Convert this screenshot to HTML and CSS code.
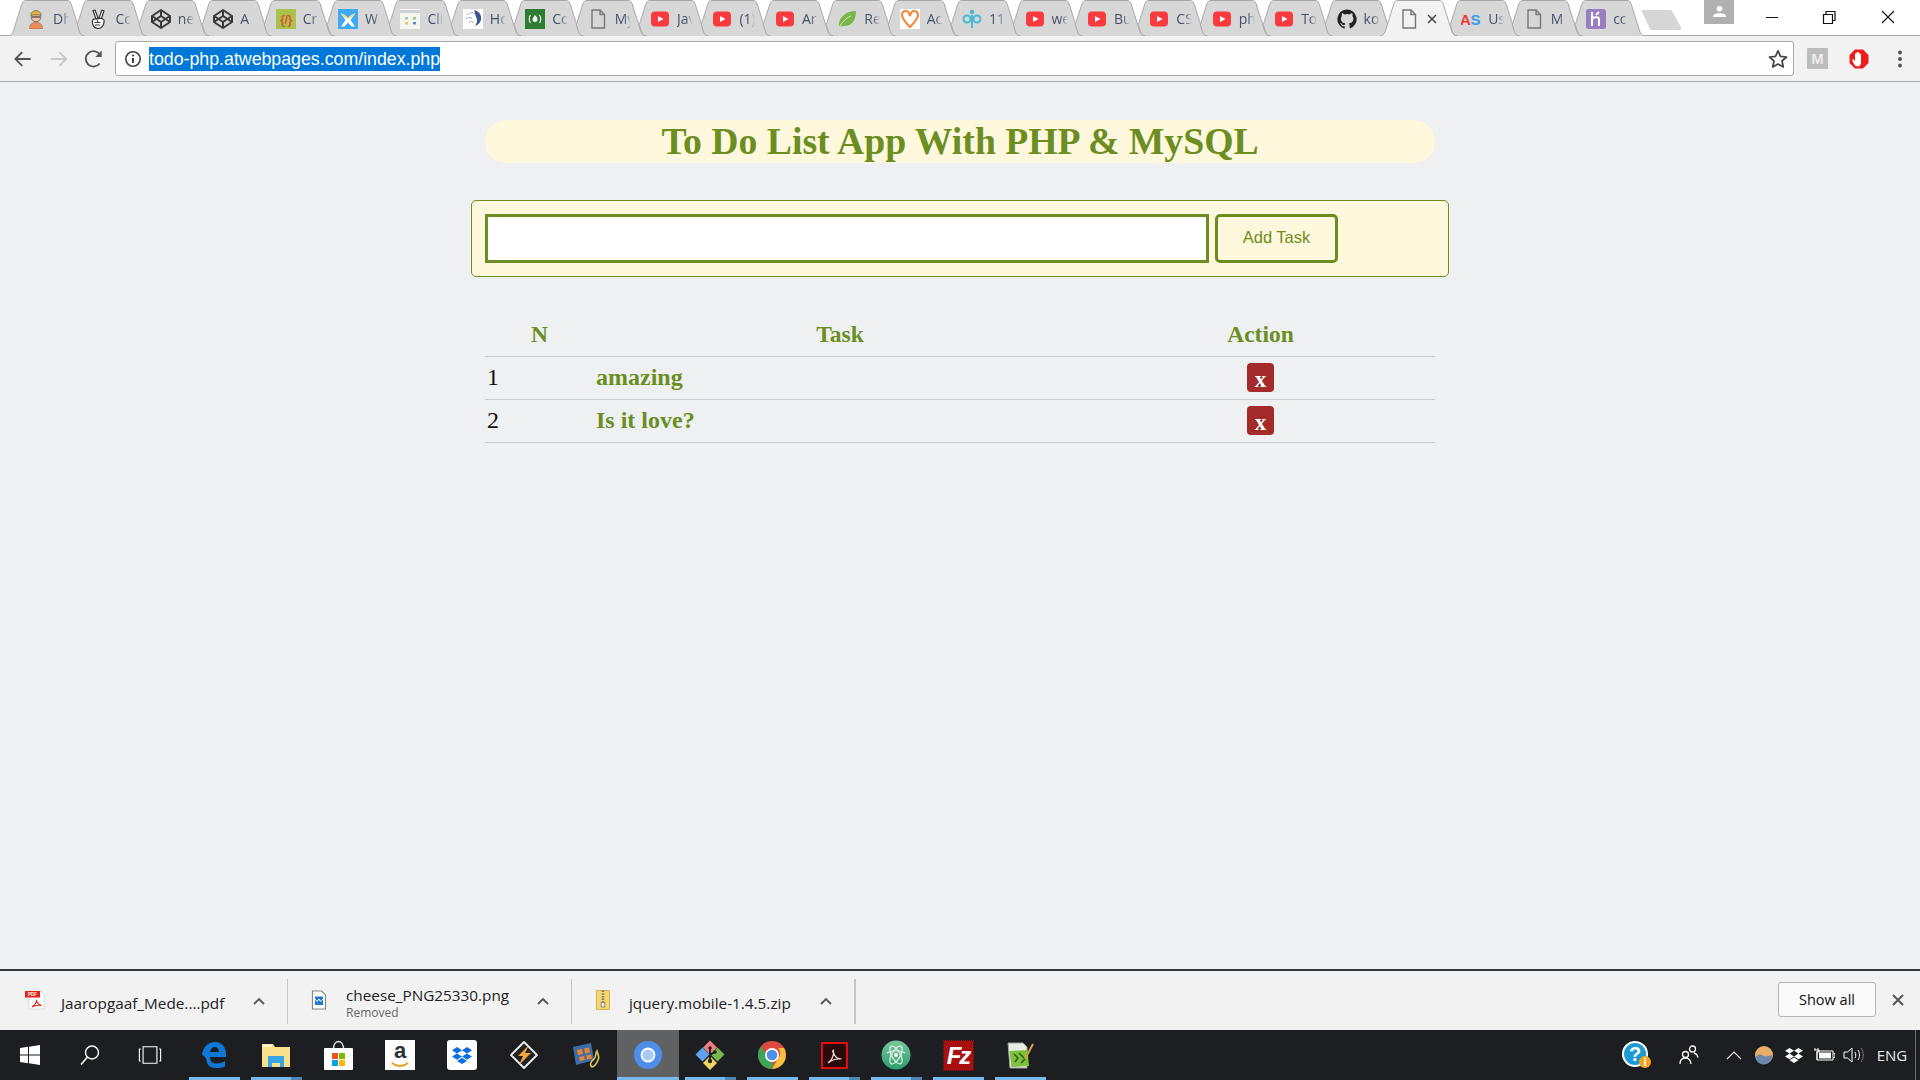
FILE: index.html
```html
<!DOCTYPE html>
<html lang="en">
<head>
<meta charset="utf-8">
<title>To Do List App</title>
<link rel="stylesheet" href="styles.css">
</head>
<body>
<svg class="defs" aria-hidden="true">
  <symbol id="tabfull" viewBox="0 0 77 36"><path d="M0 36C2.500 36 4 34 5 32L14 3.500C14.800 1.300 16 .5 18 .5H59C61 .5 62.200 1.300 63 3.500L72 32C73 34 74.500 36 77 36"/></symbol>
  <symbol id="tabcut" viewBox="0 0 77 36"><path d="M14.600 36C12 36 10.500 34 9.600 32L7.300 24.700L14 3.500C14.800 1.300 16 .5 18 .5H59C61 .5 62.200 1.300 63 3.500L72 32C73 34 74.500 36 77 36"/></symbol>
  <symbol id="yt" viewBox="0 0 20 20"><rect x="1" y="2.500" width="18" height="15" rx="4" fill="#fb3a3f"/><path d="M8 7l5.500 3L8 13z" fill="#fff"/></symbol>
  <symbol id="doc" viewBox="0 0 20 20"><path d="M4 1h8l4.500 4.500V19H4zM12 1v4.500h4.500" fill="none" stroke="#777" stroke-width="1.400"/></symbol>
  <symbol id="codepen" viewBox="0 0 20 20"><g fill="none" stroke="#3a3a3a" stroke-width="2" stroke-linejoin="round"><path d="M10 1l9 6v6l-9 6-9-6V7z"/><path d="M10 1v6M10 13v6M1 7l9 6 9-6M1 13l9-6 9 6"/></g></symbol>
  <symbol id="chev" viewBox="0 0 12 8"><path d="M1 7l5-5 5 5" fill="none" stroke="#555" stroke-width="1.800"/></symbol>
  <symbol id="dbx" viewBox="0 0 20 18"><path d="M5 1l5 3.200-5 3.200L0 4.200zM15 1l5 3.200-5 3.200-5-3.200zM5 7.400l5 3.200-5 3.200-5-3.200zM15 7.400l5 3.200-5 3.200-5-3.200zM10 11.800l5 3.200-5 3-5-3z"/></symbol>
</svg>

<header class="chrome">
  <div class="strip">
    <div class="tabs">
      <div class="tab"><svg class="shape"><use href="#tabfull"/></svg><div class="tab-in">
        <svg class="fav" viewBox="0 0 20 20"><path d="M3.500 20c0-5 2.500-6.500 6.500-6.500s6.500 1.500 6.500 6.500z" fill="#ef8a5a" stroke="#8a5a40" stroke-width=".5"/><circle cx="10" cy="8" r="4.800" fill="#f2c6a0" stroke="#555" stroke-width=".8"/><path d="M5 6.500C4.500 0 15.500 0 15 6.500c-3-1-7-1-10 0z" fill="#e2b63f" stroke="#555" stroke-width=".7"/><path d="M6 8h8" stroke="#333" stroke-width="1.100"/></svg><span class="lbl">Dh</span></div></div>
      <div class="tab"><svg class="shape"><use href="#tabcut"/></svg><div class="tab-in">
        <svg class="fav" viewBox="0 0 20 20"><g fill="#fff" stroke="#333" stroke-width="1.200" stroke-linejoin="round"><path d="M8 10L5 1.500l2-.5 3 8zM11 9l3-8 2 .7-3 9z"/><path d="M4.500 12c0-2 3-2.500 4-2 3-1 6-1 7.500 1 .5 4-1.500 8.500-6 8.500-4 0-6-4-5.500-7.500z"/></g><path d="M6.500 13.500h6M7 16h5M9 10.500l1 3" stroke="#333" fill="none"/></svg><span class="lbl">Cc</span></div></div>
      <div class="tab"><svg class="shape"><use href="#tabcut"/></svg><div class="tab-in"><svg class="fav"><use href="#codepen"/></svg><span class="lbl">ne</span></div></div>
      <div class="tab"><svg class="shape"><use href="#tabcut"/></svg><div class="tab-in"><svg class="fav"><use href="#codepen"/></svg><span class="lbl">A</span></div></div>
      <div class="tab"><svg class="shape"><use href="#tabcut"/></svg><div class="tab-in">
        <svg class="fav" viewBox="0 0 20 20"><rect width="20" height="20" fill="#a9c24c"/><text x="10" y="15" text-anchor="middle" class="favtxt" fill="#dc5a35">{/}</text></svg><span class="lbl">Cr</span></div></div>
      <div class="tab"><svg class="shape"><use href="#tabcut"/></svg><div class="tab-in">
        <svg class="fav" viewBox="0 0 20 20"><rect width="20" height="20" fill="#3fa9f5"/><path d="M3 4.500c2 1 4 .5 7 5 3-4.500 5-4 7-5l-4.500 6.500 4.500 6.500h-3.500L10 13.500 6.500 17.500H3l4.500-6.500z" fill="#fff"/><path d="M3 4.500c2 1 4 .5 7 5 3-4.500 5-4 7-5l-3 4.500c-2-1-3 0-4 2-1-2-2-3-4-2z" fill="#f6dc7a"/></svg><span class="lbl">W</span></div></div>
      <div class="tab"><svg class="shape"><use href="#tabcut"/></svg><div class="tab-in">
        <svg class="fav" viewBox="0 0 20 20"><rect width="20" height="20" fill="#f6f6f0"/><rect y="1" width="20" height="3" fill="#cbcfd6"/><rect x="5" y="8" width="3" height="2.500" fill="#9ccb8a"/><rect x="13" y="8" width="3" height="2.500" fill="#9ccb8a"/><rect x="5" y="13" width="3" height="2.500" fill="#eec95a"/><rect x="13" y="13" width="3" height="2.500" fill="#6a86c9"/></svg><span class="lbl">Cli</span></div></div>
      <div class="tab"><svg class="shape"><use href="#tabcut"/></svg><div class="tab-in">
        <svg class="fav" viewBox="0 0 20 20"><rect width="20" height="20" fill="#fff"/><path d="M11 1c5 1 8 5 7 10-1 3-3 5-6 6 2-3 3-6 1-9-1-3-1-5-2-7z" fill="#3c5690"/><path d="M4 6c3-3 6-3 8-1M3 10c2-2 5-2 7 0M6 13c2-1 4 0 5 1" stroke="#7e92b8" stroke-width="1" fill="none" stroke-dasharray="1.500 1"/></svg><span class="lbl">Ho</span></div></div>
      <div class="tab"><svg class="shape"><use href="#tabcut"/></svg><div class="tab-in">
        <svg class="fav" viewBox="0 0 20 20"><rect width="20" height="20" fill="#2f7d32"/><path d="M5.500 6c-1.500 2.500-1.500 6 0 8M14.500 6c1.500 2.500 1.500 6 0 8" stroke="#fff" stroke-width="1.100" fill="none"/><path d="M10 6c1.500 1.500 2.500 3 2.500 4.500S11.500 13 10 13s-2.500-1-2.500-2.500 1-1.500 1-2 .5-1.500 1.500-2.500z" fill="#fff"/></svg><span class="lbl">Cc</span></div></div>
      <div class="tab"><svg class="shape"><use href="#tabcut"/></svg><div class="tab-in"><svg class="fav"><use href="#doc"/></svg><span class="lbl">My</span></div></div>
      <div class="tab"><svg class="shape"><use href="#tabcut"/></svg><div class="tab-in"><svg class="fav"><use href="#yt"/></svg><span class="lbl">Jav</span></div></div>
      <div class="tab"><svg class="shape"><use href="#tabcut"/></svg><div class="tab-in"><svg class="fav"><use href="#yt"/></svg><span class="lbl">(1)</span></div></div>
      <div class="tab"><svg class="shape"><use href="#tabcut"/></svg><div class="tab-in"><svg class="fav"><use href="#yt"/></svg><span class="lbl">Ar</span></div></div>
      <div class="tab"><svg class="shape"><use href="#tabcut"/></svg><div class="tab-in">
        <svg class="fav" viewBox="0 0 20 20"><path d="M2 18C1 9 8 2 19 2c0 10-5 16-13 15z" fill="#7ab648"/><path d="M2 19C5 13 9 9 14 7" stroke="#d8ecc4" fill="none"/></svg><span class="lbl">Re</span></div></div>
      <div class="tab"><svg class="shape"><use href="#tabcut"/></svg><div class="tab-in">
        <svg class="fav" viewBox="0 0 20 20"><rect width="20" height="20" fill="#fff"/><path d="M10 18C5 13 2 9 2 6c0-3 2-4 4-4 2 0 3 1 4 5 1-4 2-5 4-5s4 1 4 4c0 3-3 7-8 12z" fill="none" stroke="#f08a3c" stroke-width="2.200"/></svg><span class="lbl">Ac</span></div></div>
      <div class="tab"><svg class="shape"><use href="#tabcut"/></svg><div class="tab-in">
        <svg class="fav" viewBox="0 0 20 20"><g fill="none" stroke="#45b8d2" stroke-width="2"><circle cx="5" cy="10" r="3.500"/><circle cx="15" cy="10" r="3.500"/><path d="M10 6v13"/></g><circle cx="10" cy="3" r="2.200" fill="#45b8d2"/></svg><span class="lbl">11</span></div></div>
      <div class="tab"><svg class="shape"><use href="#tabcut"/></svg><div class="tab-in"><svg class="fav"><use href="#yt"/></svg><span class="lbl">we</span></div></div>
      <div class="tab"><svg class="shape"><use href="#tabcut"/></svg><div class="tab-in"><svg class="fav"><use href="#yt"/></svg><span class="lbl">Bu</span></div></div>
      <div class="tab"><svg class="shape"><use href="#tabcut"/></svg><div class="tab-in"><svg class="fav"><use href="#yt"/></svg><span class="lbl">CS</span></div></div>
      <div class="tab"><svg class="shape"><use href="#tabcut"/></svg><div class="tab-in"><svg class="fav"><use href="#yt"/></svg><span class="lbl">ph</span></div></div>
      <div class="tab"><svg class="shape"><use href="#tabcut"/></svg><div class="tab-in"><svg class="fav"><use href="#yt"/></svg><span class="lbl">To</span></div></div>
      <div class="tab"><svg class="shape"><use href="#tabcut"/></svg><div class="tab-in">
        <svg class="fav" viewBox="0 0 20 20"><path d="M10 .5a9.700 9.700 0 0 0-3 18.900c.5.100.7-.2.7-.5v-1.700c-2.700.6-3.300-1.300-3.300-1.300-.5-1.100-1.100-1.400-1.100-1.400-.9-.6.100-.6.100-.6 1 .1 1.500 1 1.500 1 .9 1.500 2.300 1.100 2.900.8.100-.6.300-1.100.6-1.300-2.200-.2-4.500-1.100-4.500-4.800 0-1.100.4-1.900 1-2.600-.1-.2-.4-1.200.1-2.600 0 0 .8-.3 2.700 1a9 9 0 0 1 4.900 0c1.900-1.300 2.700-1 2.700-1 .5 1.400.2 2.400.1 2.600.6.700 1 1.500 1 2.600 0 3.700-2.300 4.600-4.500 4.800.4.300.7.900.7 1.800v2.600c0 .3.200.6.700.5A9.700 9.700 0 0 0 10 .5z" fill="#222"/></svg><span class="lbl">ko</span></div></div>
      <div class="tab tab-active"><svg class="shape"><use href="#tabfull"/></svg><div class="tab-in"><svg class="fav"><use href="#doc"/></svg>
        <svg class="tab-x" viewBox="0 0 10 10"><path d="M1 1l8 8M9 1l-8 8" stroke="#444" stroke-width="1.500"/></svg></div></div>
      <div class="tab"><svg class="shape"><use href="#tabcut"/></svg><div class="tab-in">
        <svg class="fav" viewBox="0 0 20 20"><text x="-1" y="16" class="astxt" fill="#ee3b3b">A</text><text x="9.500" y="16" class="astxt" fill="#3c9ae8">S</text></svg><span class="lbl">Us</span></div></div>
      <div class="tab"><svg class="shape"><use href="#tabcut"/></svg><div class="tab-in"><svg class="fav"><use href="#doc"/></svg><span class="lbl">M</span></div></div>
      <div class="tab"><svg class="shape"><use href="#tabcut"/></svg><div class="tab-in">
        <svg class="fav" viewBox="0 0 20 20"><rect width="20" height="20" rx="2.500" fill="#9a7fc0"/><path d="M6 3v14M6 9.500c3-1.500 7-2 7 1V17M13 3l-3 3" stroke="#fff" stroke-width="2" fill="none"/></svg><span class="lbl">cc</span></div></div>
    </div>
    <svg class="newtab" viewBox="0 0 41 21"><path d="M2 1h27c1 0 2 .5 2.500 2L40 18c.5 1.500 0 3-2 3H11c-1 0-2-.5-2.500-2L1 3C.5 1.500 1 1 2 1z" fill="#d6d6d6"/></svg>
    <div class="profile"><svg class="profile-ic" viewBox="0 0 14 14"><circle cx="7" cy="4" r="3" fill="#fff"/><path d="M0 13c0-3 3-4 7-4s7 1 7 4z" fill="#fff"/></svg></div>
    <div class="winbtns">
      <svg class="winbtn" viewBox="0 0 58 34"><path d="M23 17.500h12" stroke="#111" stroke-width="1"/></svg>
      <svg class="winbtn" viewBox="0 0 58 34"><path d="M23.500 14.500h9v9h-9zM26 14.500V11.500h9v9h-2.500" fill="none" stroke="#111" stroke-width="1.200"/></svg>
      <svg class="winbtn" viewBox="0 0 58 34"><path d="M23 11l12 12M35 11L23 23" stroke="#111" stroke-width="1.100"/></svg>
    </div>
  </div>
  <div class="toolbar">
    <svg class="tbtn" viewBox="0 0 36 36"><path d="M26 18H11M17.500 11L10.500 18l7 7" fill="none" stroke="#555" stroke-width="1.900"/></svg>
    <svg class="tbtn" viewBox="0 0 36 36"><path d="M10 18h15M18.500 11l7 7-7 7" fill="none" stroke="#c8c8c8" stroke-width="1.900"/></svg>
    <svg class="tbtn" viewBox="0 0 36 36"><path d="M24 22.500A7.800 7.800 0 1 1 24.500 14" fill="none" stroke="#555" stroke-width="1.900"/><path d="M26 9.500v6.500h-6.500z" fill="#555"/></svg>
    <div class="omnibox">
      <svg class="info" viewBox="0 0 18 18"><circle cx="9" cy="9" r="7.200" fill="none" stroke="#444" stroke-width="1.600"/><path d="M9 8v5" stroke="#444" stroke-width="2"/><circle cx="9" cy="5.500" r="1.100" fill="#444"/></svg>
      <span class="url">todo-php.atwebpages.com/index.php</span>
      <svg class="star" viewBox="0 0 20 20"><path d="M10 1.800l2.500 5.600 6 .6-4.500 4 1.300 6L10 15l-5.300 3 1.300-6-4.500-4 6-.6z" fill="none" stroke="#444" stroke-width="1.700" stroke-linejoin="round"/></svg>
    </div>
    <div class="ext ext-first"><span class="ext-m">M</span></div>
    <div class="ext"><svg class="ext-stop" viewBox="0 0 20 20"><path d="M6 .5h8l5.500 5.500v8L14 19.500H6L.5 14V6z" fill="#ee1c1c"/><path d="M6.500 17c-1-1.500-3-4-3.200-6 0-.8.800-1 1.300-.5L6 12V5c0-1 1.500-1 1.500 0v4V3.500c0-1 1.600-1 1.600 0V9V4c0-1 1.500-1 1.500 0v5.500V5.500c0-1 1.400-1 1.400 0V13c0 2.500-1 4-2.500 4.500z" fill="#fff"/></svg></div>
    <div class="ext"><svg class="ext-dots" viewBox="0 0 6 18"><circle cx="3" cy="2.500" r="2" fill="#555"/><circle cx="3" cy="9" r="2" fill="#555"/><circle cx="3" cy="15.500" r="2" fill="#555"/></svg></div>
  </div>
</header>

<main class="page">
  <div class="wrap">
    <h1 class="title">To Do List App With PHP &amp; MySQL</h1>
    <form class="task-form">
      <input class="task-input" type="text" aria-label="Task">
      <button class="add-btn" type="button">Add Task</button>
    </form>
    <table class="tasks">
      <colgroup><col class="c-n"><col class="c-t"><col class="c-a"></colgroup>
      <thead><tr><th>N</th><th>Task</th><th>Action</th></tr></thead>
      <tbody>
        <tr><td>1</td><td class="task">amazing</td><td class="act"><a class="del">x</a></td></tr>
        <tr><td>2</td><td class="task">Is it love?</td><td class="act"><a class="del">x</a></td></tr>
      </tbody>
    </table>
  </div>
</main>

<section class="shelf">
  <div class="dl dl-1">
    <svg class="dl-ic" viewBox="0 0 22 20"><path d="M5 1h11l4 4v14H5z" fill="#fff" stroke="#dcdcdc"/><rect x="1" y="1" width="15" height="6.500" fill="#e2231a"/><text x="8.500" y="6.200" text-anchor="middle" class="pdftxt" fill="#fff">PDF</text><path d="M8 17c3-2 4.500-4 4.500-7 0 3 2 4.500 5 5.500-4-.5-7 0-9.500 1.500z" fill="none" stroke="#e2231a" stroke-width="1.100"/></svg>
    <div class="dl-text dl-text-one"><span class="dl-name">Jaaropgaaf_Mede....pdf</span></div>
    <svg class="dl-chev"><use href="#chev"/></svg>
  </div>
  <div class="dl dl-2">
    <svg class="dl-ic" viewBox="0 0 22 20"><path d="M4.500 1h9l4 4v14h-13z" fill="#fff" stroke="#888" stroke-width="1.200"/><rect x="7" y="6.500" width="8" height="8.500" fill="#1c78d0"/><path d="M7 9l2 2.500L11 9l1.500 2.500L15 9" stroke="#fff" fill="none"/></svg>
    <div class="dl-text"><span class="dl-name">cheese_PNG25330.png</span><span class="dl-sub">Removed</span></div>
    <svg class="dl-chev"><use href="#chev"/></svg>
  </div>
  <div class="dl dl-3">
    <svg class="dl-ic" viewBox="0 0 22 20"><path d="M4.500 .5h13v19h-13z" fill="#f7d670" stroke="#d9b44a"/><path d="M11 .5v12" stroke="#777" stroke-width="2.500" stroke-dasharray="1.500 1.200"/><rect x="9.200" y="12.500" width="3.600" height="4.500" fill="#eee" stroke="#777" stroke-width=".8"/></svg>
    <div class="dl-text dl-text-one"><span class="dl-name">jquery.mobile-1.4.5.zip</span></div>
    <svg class="dl-chev"><use href="#chev"/></svg>
  </div>
  <button class="show-all" type="button">Show all</button>
  <div class="shelf-close"><svg class="shelf-x" viewBox="0 0 12 12"><path d="M1 1l10 10M11 1L1 11" stroke="#555" stroke-width="2"/></svg></div>
</section>

<footer class="taskbar">
  <div class="sys"><svg class="ti-win" viewBox="0 0 20 20"><path d="M0 3l8-1.200V9.500H0zM9 1.700L20 0v9.500H9zM0 10.500h8v7.700L0 17zM9 10.500h11V20L9 18.300z" fill="#fff"/></svg></div>
  <div class="sys"><svg class="ti-sys" viewBox="0 0 22 22"><circle cx="13" cy="8.500" r="6.500" fill="none" stroke="#fff" stroke-width="1.400"/><path d="M8.500 13L2 20.500" stroke="#fff" stroke-width="1.500"/></svg></div>
  <div class="sys sys-last"><svg class="ti-sys" viewBox="0 0 26 22"><path d="M5.500 2h15v18h-15zM3 4.500H1.500v13H3M23 4.500h1.500v13H23" fill="none" stroke="#fff" stroke-width="1.200"/></svg></div>

  <div class="app"><div class="app-ic"><svg class="ai-edge" viewBox="0 0 24 26"><path d="M0 13C1 5 6 0 13 0c7 0 11 5 11 12v3H8c0 5 3 6.500 7 6.500 3 0 6-1 8-2.500v5.500c-3 1.500-6 1.500-9 1.500-6 0-9-3-9.500-8C3.500 15 2 14 0 13zM8 10h9c0-3-1.500-5-4-5-3 0-4.500 2-5 5z" fill="#0f78d4"/></svg></div><span class="bar"></span></div>
  <div class="app"><div class="app-ic"><svg class="ai-folder" viewBox="0 0 28 24"><path d="M0 1h11l2 3h15v20H0z" fill="#f8df8c"/><rect x="1" y="1.500" width="9" height="2.500" fill="#fff6d0"/><path d="M6 24V13h16v11h-4v-4h-8v4z" fill="#3aa5e6"/></svg></div><span class="bar bar-multi"></span></div>
  <div class="app"><div class="app-ic"><svg class="ai-store" viewBox="0 0 29 30"><path d="M9.500 9c0-10 10-10 10 0" fill="none" stroke="#ddd" stroke-width="1.500"/><rect y="8" width="29" height="22" rx="1" fill="#fff"/><rect x="8" y="13" width="6" height="6" fill="#f25022"/><rect x="15" y="13" width="6" height="6" fill="#7fba00"/><rect x="8" y="20" width="6" height="6" fill="#00a4ef"/><rect x="15" y="20" width="6" height="6" fill="#ffb900"/></svg></div><span class="bar bar-none"></span></div>
  <div class="app"><div class="app-ic"><div class="ai-amazon"><span class="amz">a</span><svg class="amz-smile" viewBox="0 0 20 6"><path d="M2 1c5 4 11 4 16 0" stroke="#f39a1f" stroke-width="1.800" fill="none"/></svg></div></div><span class="bar bar-none"></span></div>
  <div class="app"><div class="app-ic"><div class="ai-dropbox"><svg class="dbx-blue"><use href="#dbx"/></svg></div></div><span class="bar bar-none"></span></div>
  <div class="app"><div class="app-ic"><svg class="ai" viewBox="0 0 30 30"><path d="M15 2c4 4 8 8 13 13-5 5-9 9-13 13L2 15z" fill="#222" stroke="#eee" stroke-width="1.800" stroke-linejoin="round"/><path d="M20 5L9 16h5l-4 9 12-12h-6z" fill="#f3a63a"/></svg></div><span class="bar bar-none"></span></div>
  <div class="app"><div class="app-ic"><svg class="ai" viewBox="0 0 30 30"><path d="M2 7l18-4 3 17-18 5z" fill="#3d6ea8"/><path d="M6 10l5-1 1 5-5 1zM13 8.500l5-1 1 5-5 1zM8 17l5-1 1 4-5 1zM15 15.500l5-1 1 4-5 1z" fill="#e8832e"/><path d="M21 27c-3-2-1-6 2-8 2-1 1-5 3-8 1 4 3 6 1 9-1 2-2 6-6 7z" fill="none" stroke="#d9c45a" stroke-width="1.600"/></svg></div><span class="bar bar-none"></span></div>
  <div class="app app-on"><div class="app-ic"><svg class="ai" viewBox="0 0 30 30"><circle cx="15" cy="15" r="14" fill="#4e8ee8"/><circle cx="15" cy="15" r="6.500" fill="#a9c9f5" stroke="#fff" stroke-width="1.800"/></svg></div><span class="bar bar-full"></span></div>
  <div class="app"><div class="app-ic"><svg class="ai" viewBox="0 0 30 30"><path d="M15 16l7 7-7 7-7-7z" fill="#f5d260"/><path d="M7.500 7.500l7 7-7 7-7-7z" fill="#5fa3f0"/><path d="M15 1l7 7-7 7-7-7z" transform="translate(0 -.5)" fill="#ef7f82"/><path d="M22.500 7.500l7 7-7 7-7-7z" fill="#79b84c"/><path d="M15 8v13M15 15l5-3" stroke="#222" stroke-width="2" fill="none"/><circle cx="15" cy="21" r="2.200" fill="#222"/><circle cx="20" cy="12" r="1.800" fill="#222"/><circle cx="15" cy="8" r="1.800" fill="#222"/></svg></div><span class="bar bar-multi"></span></div>
  <div class="app"><div class="app-ic"><svg class="ai" viewBox="0 0 30 30"><circle cx="15" cy="15" r="14" fill="#dd4b3e"/><path d="M27.100 8A14 14 0 0 1 15 29l6-10.500A7 7 0 0 0 21 8z" fill="#f5c33b"/><path d="M15 29A14 14 0 0 1 4 6.500l6 10a7 7 0 0 0 6 6z" fill="#3ba55a"/><circle cx="15" cy="15" r="7" fill="#fff"/><circle cx="15" cy="15" r="5.300" fill="#4e8ee8"/></svg></div><span class="bar"></span></div>
  <div class="app"><div class="app-ic"><svg class="ai-acro" viewBox="0 0 27 27"><rect x="1" y="1" width="25" height="25" fill="#2b0a0a" stroke="#e01010" stroke-width="2"/><path d="M7 21c4-3 6-8 5.500-13-1 0-1 2 0 3 1 3 4 6 8 6-4-.5-10 1-13.500 4z" fill="none" stroke="#e8d8d8" stroke-width="1.200"/></svg></div><span class="bar bar-multi"></span></div>
  <div class="app"><div class="app-ic"><svg class="ai" viewBox="0 0 30 30"><defs><linearGradient id="atomg" x1="0" y1="0" x2="0" y2="1"><stop offset="0" stop-color="#74c89c"/><stop offset="1" stop-color="#2d9e6e"/></linearGradient></defs><circle cx="15" cy="15" r="14.500" fill="url(#atomg)"/><g fill="none" stroke="#e8f5ee" stroke-width="1.200"><ellipse cx="15" cy="15" rx="10" ry="4.200" transform="rotate(60 15 15)"/><ellipse cx="15" cy="15" rx="10" ry="4.200" transform="rotate(120 15 15)"/><path d="M6 13c5-3 13-3 18 0"/></g><circle cx="15" cy="15" r="2" fill="#fff"/></svg></div><span class="bar bar-multi"></span></div>
  <div class="app"><div class="app-ic"><div class="ai-fz"><span class="fz">Fz</span></div></div><span class="bar"></span></div>
  <div class="app"><div class="app-ic"><svg class="ai-acro" viewBox="0 0 27 27"><path d="M1 1h15l4 4v21H3z" fill="#e9eee6" stroke="#9aa29a"/><path d="M2.500 9l18-1 1.500 16-17.500 1z" fill="#7ec13c"/><path d="M7 12l4 4-3 4M12 11l6 6-4 4" stroke="#2d5a1a" stroke-width="1.500" fill="none"/><path d="M18 17L26 2" stroke="#d9a441" stroke-width="2"/></svg></div><span class="bar"></span></div>

  <div class="tray">
    <div class="tr tr-help"><svg class="help" viewBox="0 0 30 28"><circle cx="13" cy="13" r="12" fill="#1b9ad6" stroke="#fff" stroke-width="2"/><text x="13" y="20" text-anchor="middle" class="helptxt" fill="#fff">?</text><circle cx="23" cy="21" r="6" fill="#f6a21c"/><path d="M23 19v6" stroke="#fff" stroke-width="1.600"/><circle cx="23" cy="17.500" r="1" fill="#fff"/></svg></div>
    <div class="tr tr-people"><svg class="people" viewBox="0 0 20 20"><g fill="none" stroke="#fff" stroke-width="1.300"><circle cx="13.500" cy="4" r="3"/><circle cx="6.500" cy="9.500" r="3"/><path d="M1 19c0-4 2-6 5.500-6s5 2 5.500 6M15 8c2 .5 3.500 2 4 4.500"/></g></svg></div>
    <div class="tr"><svg class="tri-up" viewBox="0 0 16 10"><path d="M1 9l7-7 7 7" fill="none" stroke="#fff" stroke-width="1.100"/></svg></div>
    <div class="tr"><svg class="weather" viewBox="0 0 20 20"><circle cx="10" cy="10" r="9" fill="#e9ad6a"/><path d="M1.500 13c2-4 5-4 7-2.500s5 1 9.500-.5c.5 5-3 9.500-8 9.500-4 0-7.500-2.500-8.500-6.500z" fill="#6c86ad"/></svg></div>
    <div class="tr"><svg class="dbx-white"><use href="#dbx"/></svg></div>
    <div class="tr"><svg class="batt" viewBox="0 0 22 14"><path d="M4 3h16v9H4zM20 5.500h2v4h-2" fill="none" stroke="#fff" stroke-width="1"/><rect x="6" y="4.500" width="12" height="6" fill="#fff"/><path d="M2 0v2M5 0v2M1 2h5v2H4v8" stroke="#fff" fill="none"/></svg></div>
    <div class="tr"><svg class="spk" viewBox="0 0 22 18"><path d="M1 6h3.500L9 2v14l-4.500-4H1z" fill="none" stroke="#fff"/><path d="M12 6c1 2 1 4 0 6M15 4c2 3 2 7 0 10" fill="none" stroke="#fff"/><path d="M18 2c3 4 3 10 0 14" fill="none" stroke="#777"/></svg></div>
    <div class="tr tr-lang">ENG</div>
    <div class="tr-show"></div>
  </div>
</footer>
</body>
</html>
```

FILE: styles.css
```css
* { box-sizing: border-box; }
html, body { height: 100%; margin: 0; }
body { display: flex; flex-direction: column; width: 1920px; height: 1080px; overflow: hidden; background: #eff0f2; font-family: "Liberation Serif", serif; }
.defs { display: none; }

/* browser chrome */
.chrome { flex: none; height: 82px; display: flex; flex-direction: column; }
.strip { height: 36px; display: flex; background: linear-gradient(#fff 0 35px, #a9a9a9 35px); }
.tabs { display: flex; padding-left: 7.5px; flex: none; width: 1630px; }
.tab { flex: none; width: 77px; height: 36px; margin-right: -14.6px; display: grid; }
.tab > * { grid-area: 1 / 1; }
.shape { width: 77px; height: 36px; fill: #d7d7d7; stroke: #a9a9a9; stroke-width: 1; }
.tab-in { display: flex; align-items: center; padding: 1px 0 0 18.5px; height: 36px; }
.fav { width: 20px; height: 20px; flex: none; }
.favtxt { font: 700 13px "Liberation Sans", sans-serif; letter-spacing: -.5px; }
.astxt { font: 700 15px "Liberation Sans", sans-serif; }
.lbl { margin-left: 7px; width: 16px; overflow: hidden; white-space: nowrap; font: 14px/20px "Open Sans", sans-serif; color: #45506a; -webkit-mask-image: linear-gradient(90deg, #000 55%, transparent); mask-image: linear-gradient(90deg, #000 55%, transparent); }
.tab-active { z-index: 2; }
.tab-active .shape { fill: #f2f2f2; }
.tab-active .fav { margin-right: 8px; }
.tab-x { width: 10px; height: 10px; }
.newtab { flex: none; width: 41px; height: 21px; margin: 9px 0 0 11px; }
.profile { flex: none; width: 30px; height: 24px; margin-left: 22px; background: #b0b0b0; display: flex; justify-content: center; padding-top: 5px; }
.profile-ic { width: 13px; height: 13px; }
.winbtns { display: flex; margin-left: auto; padding-right: 3px; }
.winbtn { width: 58px; height: 34px; flex: none; display: block; }
.winbtn:nth-child(2) { margin: 0 1px 0 -1px; }

.toolbar { flex: none; height: 46px; display: flex; align-items: center; padding-left: 5px; background: #f2f2f2; border-bottom: 1px solid #a9a9a9; }
.tbtn { width: 35.5px; height: 36px; flex: none; }
.omnibox { margin-left: 3.5px; width: 1679px; height: 35px; flex: none; display: flex; align-items: center; padding: 0 5px 0 8px; background: #fff; border: 1px solid #a9a9a9; border-radius: 3px; }
.info { width: 18px; height: 18px; flex: none; }
.url { margin-left: 7px; height: 24px; padding: 0; font: 17.750px/24px "Liberation Sans", sans-serif; background: #0078d7; color: #fff; white-space: nowrap; }
.star { width: 20px; height: 20px; margin-left: auto; }
.ext { flex: none; width: 41px; height: 36px; display: flex; align-items: center; justify-content: center; }
.ext-first { margin-left: 3px; }
.ext-m { width: 21px; height: 21px; background: #bdbdbd; color: #ececec; font: 700 15px/21px "Liberation Sans", sans-serif; text-align: center; border-radius: 1px; }
.ext-stop { width: 20px; height: 20px; }
.ext-dots { width: 6px; height: 18px; }

/* page */
.page { flex: 1; min-height: 0; display: flex; justify-content: center; padding-top: 38px; }
.wrap { width: 978px; display: flex; flex-direction: column; align-items: center; }
.title { width: 950px; height: 43px; margin: 0 0 37px; background: #fff8dc; border-radius: 22px; color: #6b8e23; text-align: center; font: 700 37.700px/43px "Liberation Serif", serif; }
.task-form { width: 978px; height: 77px; display: flex; gap: 6px; padding: 13px; background: #fff8dc; border: 1px solid #6b8e23; border-radius: 5px; }
.task-input { width: 724px; height: 49px; padding: 0 8px; background: #fff; border: 3px solid #6b8e23; border-radius: 0; outline: 0; }
.add-btn { width: 123px; height: 49px; padding: 0 0 2px; background: transparent; border: 3px solid #6b8e23; border-radius: 5px; color: #6b8e23; font: 16.500px "Liberation Sans", sans-serif; }
.tasks { width: 950px; margin-top: 36px; table-layout: fixed; border-collapse: collapse; font-size: 24px; }
.c-n { width: 109px; } .c-t { width: 492px; }
.tasks th, .tasks td { height: 43px; padding: 0 2px; border-bottom: 1px solid #cbccce; }
.tasks th { color: #6b8e23; font-weight: 700; font-size: 23.500px; text-align: center; }
.tasks td { color: #111; text-align: left; }
.tasks td.task { color: #6b8e23; font-weight: 700; }
.tasks td.act { text-align: center; }
.del { display: inline-flex; align-items: center; justify-content: center; width: 27px; height: 29px; padding-top: 3px; background: #a52a2a; border-radius: 4px; color: #fff; font-weight: 700; font-size: 23px; line-height: 1; vertical-align: middle; }

/* download shelf */
.shelf { flex: none; height: 61px; display: flex; align-items: flex-start; background: #f2f2f2; border-top: 2px solid #33363a; }
.dl { flex: none; height: 45px; margin-top: 8px; display: flex; align-items: center; border-right: 1px solid #c6c6c6; }
.dl-1 { width: 288px; padding-left: 24px; }
.dl-2 { width: 284px; padding-left: 20px; }
.dl-3 { width: 284px; padding-left: 20px; border-right-width: 2px; }
.dl-ic { width: 22px; height: 20px; flex: none; margin-bottom: 3px; }
.dl-text { width: 185px; margin-left: 15px; display: flex; flex-direction: column; font-family: "Open Sans", sans-serif; color: #222; }
.dl-text-one { padding-top: 3px; }
.dl-2 .dl-text { width: 184px; margin-left: 16px; padding-top: 2px; }
.dl-3 .dl-text { width: 184px; }
.dl-name { font-size: 15.300px; line-height: 20px; white-space: nowrap; }
.dl-sub { font-size: 12px; line-height: 15px; color: #666; }
.dl-chev { width: 12px; height: 8px; margin: 0 7px 2px; flex: none; }
.pdftxt { font: 700 4.500px "Liberation Sans", sans-serif; }
.show-all { flex: none; width: 98px; height: 35px; margin: 11px 0 0 auto; background: #fafafa; border: 1px solid #b5b5b5; border-radius: 3px; color: #111; font: 14.500px "Open Sans", sans-serif; padding: 0; }
.shelf-close { flex: none; width: 44px; height: 35px; margin-top: 11px; display: flex; align-items: center; justify-content: center; }
.shelf-x { width: 12px; height: 12px; }

/* taskbar */
.taskbar { flex: none; height: 50px; display: flex; background: #1c1e21; }
.sys { flex: none; width: 60px; display: flex; align-items: center; justify-content: center; }
.sys-last { margin-right: 3px; }
.ti-win { width: 20px; height: 20px; }
.ti-sys { width: 24px; height: 22px; }
.app { flex: none; width: 62px; display: flex; flex-direction: column; align-items: center; padding-top: 3px; }
.app-ic { flex: 1; display: flex; align-items: center; justify-content: center; }
.ai { width: 30px; height: 30px; }
.ai-edge { width: 24px; height: 26px; }
.ai-folder { width: 28px; height: 24px; }
.ai-store { width: 29px; height: 30px; }
.ai-acro { width: 27px; height: 27px; }
.bar { flex: none; width: 51px; height: 3px; background: #76b9ed; }
.bar-none { background: transparent; }
.bar-multi { background: linear-gradient(90deg, #76b9ed 78%, #4f86b2 78%); }
.bar-full { width: 62px; }
.app-on { background: #5f6163; }
.ai-amazon { width: 30px; height: 30px; background: #fff; display: flex; flex-direction: column; align-items: center; }
.amz { font: 700 22px/22px "Liberation Sans", sans-serif; color: #2b3138; }
.amz-smile { width: 20px; height: 6px; }
.ai-dropbox { width: 30px; height: 30px; background: #fff; border-radius: 3px; display: flex; align-items: center; justify-content: center; }
.dbx-blue { width: 20px; height: 18px; fill: #0b6ee0; }
.dbx-white { width: 18px; height: 16px; fill: #fff; }
.ai-fz { width: 29px; height: 29px; background: #a80f0f; display: flex; align-items: center; justify-content: center; outline: 1px dotted #a80f0f; }
.fz { font: italic 700 24px/29px "Liberation Sans", sans-serif; color: #fff; letter-spacing: -2px; }

.tray { margin-left: auto; display: flex; align-items: center; width: 312px; height: 50px; color: #fff; }
.tr { flex: none; width: 30px; height: 50px; display: flex; align-items: center; justify-content: center; }
.tr-help { width: 58px; }
.tr-people { width: 53px; padding-right: 7px; }
.tr-lang { width: 46px; font: 15px "Open Sans", sans-serif; color: #e8e8e8; }
.tr-show { flex: none; width: 1px; height: 50px; background: #6a6c6f; }
.help { width: 30px; height: 28px; }
.helptxt { font: 700 20px "Liberation Sans", sans-serif; }
.people { width: 20px; height: 20px; }
.tri-up { width: 16px; height: 10px; }
.weather { width: 20px; height: 20px; }
.batt { width: 22px; height: 14px; }
.spk { width: 22px; height: 18px; }
```
